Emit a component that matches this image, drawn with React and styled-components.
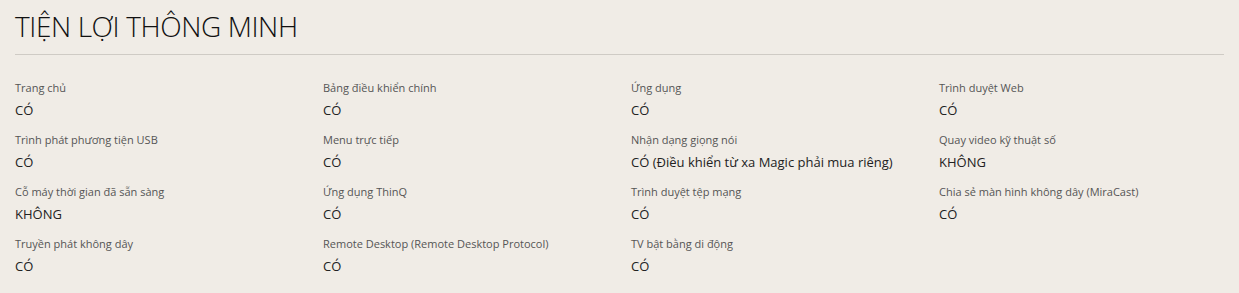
import React from 'react';
import styled, { createGlobalStyle } from 'styled-components';

const GlobalStyle = createGlobalStyle`
  html, body {
    margin: 0;
    padding: 0;
    background: #f0ece6;
  }
  body {
    font-family: "Open Sans", "Noto Sans", sans-serif;
  }
`;

const Section = styled.section`
  width: 1239px;
  height: 293px;
  box-sizing: border-box;
  padding: 8px 15px 0;
  background: #f0ece6;
  overflow: hidden;
`;

const Title = styled.h2`
  margin: 0;
  padding-bottom: 10px;
  font-size: 28px;
  font-weight: 300;
  line-height: 36px;
  color: #111;
  letter-spacing: -0.4px;
  border-bottom: 1px solid #cfcbc5;
`;

const SpecGrid = styled.dl`
  margin: 0;
  padding-top: 25px;
  display: grid;
  grid-template-columns: repeat(4, 308px);
  row-gap: 11px;
`;

const Spec = styled.div`
  display: flex;
  flex-direction: column;
  gap: 4px;
`;

const Label = styled.dt`
  font-size: 11px;
  line-height: 15px;
  color: #555;
`;

const Value = styled.dd`
  margin: 0;
  font-size: 13px;
  line-height: 22px;
  color: #222;
`;

// --- DATA ---
const SPECS = [
  ['Trang chủ', 'CÓ'],
  ['Bảng điều khiển chính', 'CÓ'],
  ['Ứng dụng', 'CÓ'],
  ['Trình duyệt Web', 'CÓ'],
  ['Trình phát phương tiện USB', 'CÓ'],
  ['Menu trực tiếp', 'CÓ'],
  ['Nhận dạng giọng nói', 'CÓ (Điều khiển từ xa Magic phải mua riêng)'],
  ['Quay video kỹ thuật số', 'KHÔNG'],
  ['Cỗ máy thời gian đã sẵn sàng', 'KHÔNG'],
  ['Ứng dụng ThinQ', 'CÓ'],
  ['Trình duyệt tệp mạng', 'CÓ'],
  ['Chia sẻ màn hình không dây (MiraCast)', 'CÓ'],
  ['Truyền phát không dây', 'CÓ'],
  ['Remote Desktop (Remote Desktop Protocol)', 'CÓ'],
  ['TV bật bằng di động', 'CÓ'],
];

const App = () => (
  <>
    <GlobalStyle />
    <Section>
      <Title>TIỆN LỢI THÔNG MINH</Title>
      <SpecGrid>
        {SPECS.map(([label, value]) => (
          <Spec key={label}>
            <Label>{label}</Label>
            <Value>{value}</Value>
          </Spec>
        ))}
      </SpecGrid>
    </Section>
  </>
);

export default App;
